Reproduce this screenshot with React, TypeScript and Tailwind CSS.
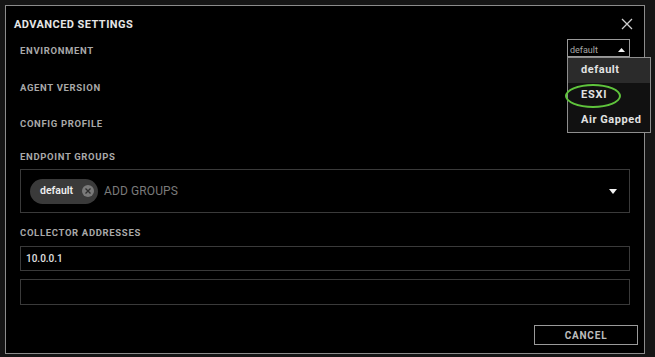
import React from "react";

const font = { fontFamily: "Roboto, 'Noto Sans', Arial, sans-serif" };

function Label({ children, className = "" }: { children: React.ReactNode; className?: string }) {
  return (
    <div className={"text-[9.5px] leading-[12px] font-bold tracking-[0.07em] text-[#a9a9a9] " + className}>
      {children}
    </div>
  );
}

export default function App() {
  return (
    <div className="w-[655px] h-[357px] bg-[#151515] pt-[5px] pl-[5px] overflow-hidden" style={font}>
      <div className="relative w-[640px] h-[349px] border border-[#8c8c8c] bg-black flex flex-col pt-[11px]">
        {/* Title row */}
        <div className="flex items-center justify-between h-[14px] pl-[8px] pr-[11px]">
          <div className="relative top-[1px] text-[11px] leading-[14px] font-bold tracking-[0.04em] text-[#e6e6e6]">ADVANCED SETTINGS</div>
          <svg width="12" height="12" viewBox="0 0 12 12">
            <path d="M1 1 L11 11 M11 1 L1 11" stroke="#cfcfcf" strokeWidth="1.3" />
          </svg>
        </div>

        <div className="flex flex-col pl-[14px] pr-[14px]">
          {/* Environment row */}
          <div className="mt-[9px] h-[18px] flex items-start justify-between">
            <Label className="pt-[5px]">ENVIRONMENT</Label>
            <div className="relative -mt-[1px] w-[63px] h-[18px] border border-[#9a9a9a] flex items-end justify-between pl-[2px] pr-[4px]">
              <span className="text-[9px] leading-[11px] text-[#a8a8a8]">default</span>
              <svg width="7" height="4" viewBox="0 0 7 4" className="mb-[4px]">
                <path d="M0 4 L3.5 0 L7 4 Z" fill="#f2f2f2" />
              </svg>
              {/* Dropdown menu */}
              <div className="absolute left-[-1px] top-[17px] w-[84px] border border-[#8e8e8e] bg-[#111111] z-10 flex flex-col">
                <div className="h-[25px] bg-[#2b2b2b] flex items-center pl-[13px] text-[11px] font-bold tracking-[0.05em] text-[#e2e2e2]">default</div>
                <div className="relative h-[25px] flex items-center pl-[13px] text-[11px] font-bold tracking-[0.07em] text-[#e2e2e2]">
                  ESXI
                  <div className="absolute left-[-3px] top-[1px] w-[56px] h-[24px] rounded-[50%] border-2 border-[#5fc43c]" />
                </div>
                <div className="h-[24px] flex items-center pl-[13px] text-[11px] font-bold tracking-[0.05em] text-[#e2e2e2]">Air Gapped</div>
              </div>
            </div>
          </div>

          <Label className="mt-[24px]">AGENT VERSION</Label>
          <Label className="mt-[24px]">CONFIG PROFILE</Label>
          <Label className="mt-[21px]">ENDPOINT GROUPS</Label>

          {/* Endpoint groups box */}
          <div className="mt-[6px] h-[44px] border border-[#3a3a3a] flex items-center pl-[9px] pr-[12px]">
            <div className="h-[25px] w-[68px] rounded-full bg-[#3a3a3a] flex items-center pl-[10px] pr-[4px] justify-between">
              <span className="text-[10.5px] font-semibold text-[#eeeeee]">default</span>
              <span className="w-[12px] h-[12px] rounded-full bg-[#7a7a7a] flex items-center justify-center">
                <svg width="6" height="6" viewBox="0 0 6 6">
                  <path d="M0.5 0.5 L5.5 5.5 M5.5 0.5 L0.5 5.5" stroke="#2e2e2e" strokeWidth="1.3" />
                </svg>
              </span>
            </div>
            <span className="ml-[6px] text-[12px] text-[#7a7a7a] tracking-[0.01em]">ADD GROUPS</span>
            <svg width="8" height="5" viewBox="0 0 8 5" className="ml-auto">
              <path d="M0 0 L8 0 L4 5 Z" fill="#f2f2f2" />
            </svg>
          </div>

          <Label className="mt-[14px]">COLLECTOR ADDRESSES</Label>

          <div className="mt-[7px] h-[25px] border border-[#3a3a3a] flex items-center pl-[5px]">
            <span className="text-[10px] font-medium text-[#e0e0e0]">10.0.0.1</span>
          </div>
          <div className="mt-[8px] h-[26px] border border-[#3a3a3a]" />
        </div>

        <div className="flex justify-end pr-[6px] mt-[20px]">
          <div className="w-[104px] h-[20px] border border-[#9a9a9a] flex items-center justify-center text-[10px] font-bold tracking-[0.08em] text-[#bdbdbd]">
            CANCEL
          </div>
        </div>
      </div>
    </div>
  );
}
